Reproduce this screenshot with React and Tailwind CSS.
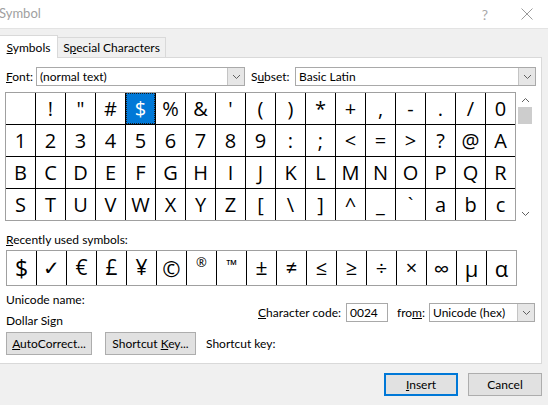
import React from "react";

const ui = "font-['Lato',sans-serif]";

const rows = [
  [" ", "!", '"', "#", "$", "%", "&", "'", "(", ")", "*", "+", ",", "-", ".", "/", "0"],
  ["1", "2", "3", "4", "5", "6", "7", "8", "9", ":", ";", "<", "=", ">", "?", "@", "A"],
  ["B", "C", "D", "E", "F", "G", "H", "I", "J", "K", "L", "M", "N", "O", "P", "Q", "R"],
  ["S", "T", "U", "V", "W", "X", "Y", "Z", "[", "\\", "]", "^", "_", "`", "a", "b", "c"],
];

const recent = [
  { c: "$", s: "text-[23px]" },
  { c: "✓", s: "text-[20px]" },
  { c: "€", s: "text-[21px]" },
  { c: "£", s: "text-[21px]" },
  { c: "¥", s: "text-[21px]" },
  { c: "©", s: "text-[22px]" },
  { c: "®", s: "text-[13px] -translate-y-[5px]" },
  { c: "™", s: "text-[14px] -translate-y-[4px]" },
  { c: "±", s: "text-[21px]" },
  { c: "≠", s: "text-[20px]" },
  { c: "≤", s: "text-[20px]" },
  { c: "≥", s: "text-[20px]" },
  { c: "÷", s: "text-[20px]" },
  { c: "×", s: "text-[20px]" },
  { c: "∞", s: "text-[22px]" },
  { c: "µ", s: "text-[22px]" },
  { c: "α", s: "text-[22px]" },
];

function Chevron({ up = false, className = "" }) {
  return (
    <svg width="9" height="6" viewBox="0 0 9 6" className={className}>
      <polyline
        points={up ? "1,5 4.5,1.5 8,5" : "1,1 4.5,4.5 8,1"}
        fill="none"
        stroke="#606060"
        strokeWidth="1"
      />
    </svg>
  );
}

function Combo({ width, text }) {
  return (
    <div className={`flex h-[19px] ${width} border border-[#a9a9a9] bg-white`}>
      <div className="flex flex-1 items-center pl-[3px] text-[12px] text-black">{text}</div>
      <div className="flex w-[17px] items-center justify-center border-l border-[#c4c4c4] bg-[#e6e6e6]">
        <Chevron />
      </div>
    </div>
  );
}

export default function App() {
  return (
    <div className={`flex h-[405px] w-[548px] flex-col overflow-hidden bg-[#f0f0f0] ${ui} text-[12px] text-black`}>
      {/* title bar */}
      <div className="flex h-[29px] items-center justify-between border-b border-[#e3e3e3] bg-white">
        <span className="-ml-[1px] text-[13px] text-[#a0a0a0]">Symbol</span>
        <div className="flex items-center">
          <span className="mr-[33px] text-[14px] text-[#a8a8a8]">?</span>
          <svg width="12" height="12" viewBox="0 0 12 12" className="mr-[15px]">
            <path d="M0.5 0.5 L11.5 11.5 M11.5 0.5 L0.5 11.5" stroke="#9a9a9a" strokeWidth="1" />
          </svg>
        </div>
      </div>

      {/* tabs */}
      <div className="relative z-10 flex h-[28px] items-end">
        <div className="-mb-px flex h-[23px] w-[58px] items-center justify-center border-r border-t border-[#d9d9d9] bg-white pt-[2px]">
          <span>
            <span className="underline">S</span>ymbols
          </span>
        </div>
        <div className="flex h-[20px] w-[108px] items-center justify-center border-r border-t border-[#d9d9d9] bg-[#f0f0f0]">
          <span>
            S<span className="underline">p</span>ecial Characters
          </span>
        </div>
      </div>

      {/* panel */}
      <div className="flex h-[307px] w-[542px] flex-col border-b border-r border-t border-[#d9d9d9] bg-white">
        {/* font row */}
        <div className="mt-[9px] flex h-[19px] items-center pl-[6px]">
          <span className="w-[30px]">
            <span className="underline">F</span>ont:
          </span>
          <Combo width="w-[209px]" text="(normal text)" />
          <span className="ml-[6px] w-[44px]">
            S<span className="underline">u</span>bset:
          </span>
          <Combo width="w-[241px]" text="Basic Latin" />
        </div>

        {/* grid */}
        <div className="mt-[6px] flex pl-[5px]">
          <div className="border border-[#a0a0a0]">
            <div className="grid grid-cols-[repeat(17,29px)] gap-px bg-black">
              {rows.flat().map((ch, i) =>
                ch === "$" && i === 4 ? (
                  <div
                    key={i}
                    className="flex h-[31px] items-center justify-center border border-dotted border-[#1a1a1a] bg-[#0078d7] font-['Open_Sans',sans-serif] text-[20px] text-white"
                  >
                    $
                  </div>
                ) : (
                  <div
                    key={i}
                    className="flex h-[31px] items-center justify-center bg-white font-['Open_Sans',sans-serif] text-[20px] text-black"
                  >
                    {ch}
                  </div>
                )
              )}
            </div>
          </div>
          <div className="flex h-[129px] w-[18px] flex-col items-center bg-white">
            <div className="flex h-[15px] w-full items-center justify-center">
              <Chevron up />
            </div>
            <div className="h-[17px] w-[14px] bg-[#cdcdcd]" />
            <div className="flex-1" />
            <div className="flex h-[15px] w-full items-center justify-center">
              <Chevron />
            </div>
          </div>
        </div>

        {/* recent label */}
        <div className="mt-[11px] h-[16px] pl-[6px] leading-[16px]">
          <span className="underline">R</span>ecently used symbols:
        </div>

        {/* recent box */}
        <div className="mt-[2px] pl-[6px]">
          <div className="inline-block border border-[#a0a0a0]">
            <div className="grid grid-cols-[repeat(17,29px)] gap-px bg-black">
              {recent.map((r, i) => (
                <div
                  key={i}
                  className="flex h-[34px] items-center justify-center bg-white font-['Open_Sans','DejaVu_Sans',sans-serif] text-black"
                >
                  <span className={`inline-block ${r.s}`}>{r.c}</span>
                </div>
              ))}
            </div>
          </div>
        </div>

        {/* info */}
        <div className="mt-[5px] flex h-[41px] pl-[6px] pr-[6px]">
          <div className="flex flex-col pt-[1px]">
            <span className="leading-[16px]">Unicode name:</span>
            <span className="mt-[5px] leading-[16px]">Dollar Sign</span>
          </div>
          <div className="ml-auto mt-[12px] flex h-[19px] items-center">
            <span className="mr-[5px]">
              <span className="underline">C</span>haracter code:
            </span>
            <div className="flex h-[19px] w-[42px] items-center border border-[#a9a9a9] pl-[3px]">0024</div>
            <span className="ml-[9px] mr-[4px]">
              fro<span className="underline">m</span>:
            </span>
            <Combo width="w-[106px]" text="Unicode (hex)" />
          </div>
        </div>

        {/* buttons */}
        <div className="flex h-[23px] items-center pl-[6px]">
          <div className="flex h-[23px] w-[86px] items-center justify-center border border-[#adadad] bg-[#e1e1e1]">
            <span>
              <span className="underline">A</span>utoCorrect...
            </span>
          </div>
          <div className="ml-[13px] flex h-[23px] w-[91px] items-center justify-center border border-[#adadad] bg-[#e1e1e1]">
            <span>
              Shortcut <span className="underline">K</span>ey...
            </span>
          </div>
          <span className="ml-[10px]">Shortcut key:</span>
        </div>
      </div>

      {/* footer */}
      <div className="mt-[9px] flex justify-end pr-[6px]">
        <div className="flex h-[23px] w-[74px] items-center justify-center border-2 border-[#0078d7] bg-[#e1e1e1]">
          <span>
            <span className="underline">I</span>nsert
          </span>
        </div>
        <div className="ml-[10px] flex h-[23px] w-[74px] items-center justify-center border border-[#adadad] bg-[#e1e1e1]">
          Cancel
        </div>
      </div>
    </div>
  );
}
